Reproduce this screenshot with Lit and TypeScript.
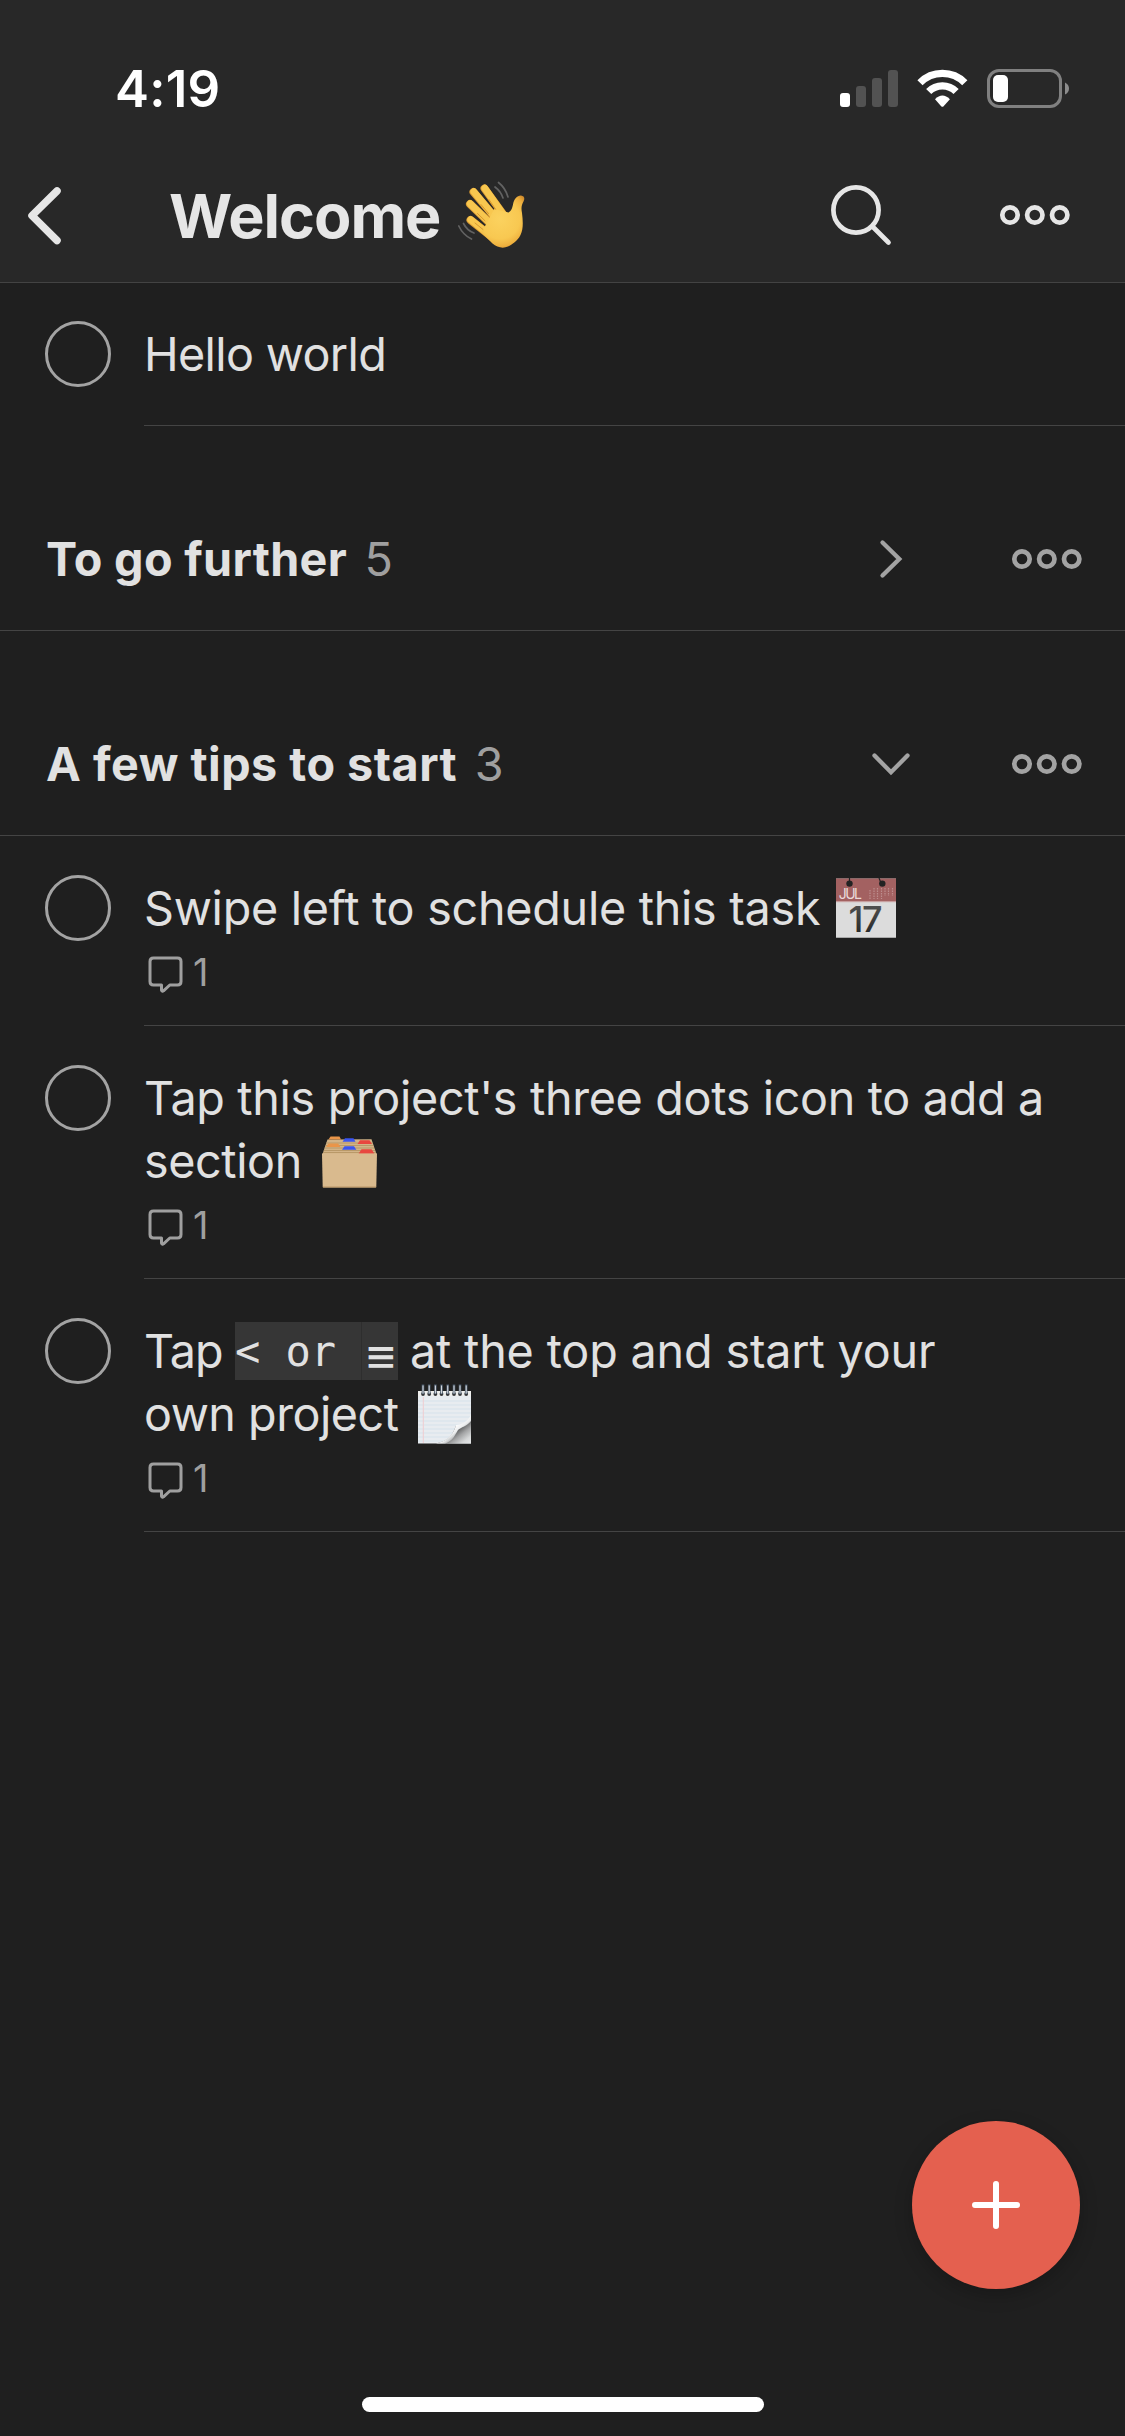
import { LitElement, html, css, svg, nothing, TemplateResult } from "lit";
import { customElement, property } from "lit/decorators.js";

const dots = html`<svg class="dots" width="72" height="22" viewBox="0 0 72 22" fill="none" stroke="currentColor" stroke-width="4.7">
  <circle cx="11" cy="11" r="7.7"/><circle cx="35.8" cy="11" r="7.7"/><circle cx="60.7" cy="11" r="7.7"/>
</svg>`;

const wave = html`<svg class="wave" role="img" width="68" height="68" viewBox="0 0 68 68" fill="none" stroke-linecap="round">
  <defs>
    <radialGradient id="skin" gradientUnits="userSpaceOnUse" cx="42" cy="38" r="32">
      <stop offset="0" stop-color="#fbd25f"/><stop offset=".62" stop-color="#f8c851"/><stop offset=".85" stop-color="#eeb03e"/><stop offset="1" stop-color="#cf8a2b"/>
    </radialGradient>
  </defs>
  <g stroke="#626262" stroke-width="1.7">
    <path d="M40.5 1.5Q47.5 7 50 16"/><path d="M37 6Q43 10.500 45 17"/>
    <path d="M.8 45Q5 54 13.500 58"/><path d="M5.500 42.500Q9 49.500 16 52"/>
  </g>
  <g stroke="#d99a33" stroke-width="8">
    <path d="M26.500 7.500L45 33M15.500 11L40 40M12 23L36 46M12.500 39L34 56"/>
  </g>
  <g stroke="#f8c74f" stroke-width="6.800">
    <path d="M26.800 7.200L45 33M15.800 10.700L40 40M12.200 22.700L36 46M12.700 38.700L34 56"/>
  </g>
  <path fill="url(#skin)" d="M36 28L50.500 31.500C53.500 30 54.500 26 55 23.500C56 18 59 14.500 63 14.600C66.500 15 67 18 65.500 20.500C63.500 24 63 27 64 32C65 40 65.500 48 62.500 54C59.500 60 54 63.500 50 65.500C45 67.800 39 66.500 34.500 62.500L23 51L29 42Z"/>
  <g stroke="#d9992f" stroke-width="1">
    <path d="M31 18.500L37.600 28.200M23 23.500L30.500 32.500M19.500 32.500L27 39.800M17 42L25 48.500"/>
  </g>
</svg>`;

const calendar = html`<svg class="emoji cal" role="img" width="60" height="60" viewBox="0 0 60 60">
  <defs><linearGradient id="ink" x1="0" y1="0" x2="0" y2="1"><stop offset="0" stop-color="#5c5c5c"/><stop offset="1" stop-color="#1d1d1d"/></linearGradient></defs>
  <rect width="60" height="60" fill="#dcdcdc"/>
  <rect width="60" height="23" fill="#a36161"/>
  <rect width="60" height="1" fill="#8a6a6a"/><rect y="23" width="60" height="1.200" fill="#c79f9f"/>
  <rect y="59" width="60" height="1" fill="#a9a9a9"/>
  <path d="M13.500 0V5M43 0L45 5" stroke="#222" stroke-width="1.200"/>
  <circle cx="13.500" cy="5.600" r="3.200" fill="#222"/><circle cx="46.300" cy="5.600" r="3.200" fill="#222"/>
  <g stroke="#bd8d8d" stroke-width="1.200" stroke-dasharray="1.500 1">
    <path d="M34 12V21M38 10V21M41.500 10V21M45.500 10V21M49 10V18M52.500 10V18M56.500 10V18"/>
  </g>
  <text class="jul" x="2.800" y="21" textLength="23">JUL</text>
  <text class="day" x="12.500" y="54" textLength="34" fill="url(#ink)">17</text>
</svg>`;

const folder = html`<svg class="emoji fold" role="img" width="55" height="52" viewBox="0 0 55 52">
  <path d="M5.500 3.500L49.500 3.200L54.500 18H.500Z" fill="#d3b488"/>
  <g stroke="#b2925f" stroke-width=".8"><path d="M4 7H50.500M3.500 9.500H51M2.500 12H52M1.800 14.500H53M1 16.500H54"/></g>
  <path d="M6.500 3.500L8.500 .500H17.500L19 3.500Z" fill="#ea9549"/>
  <path d="M4 11L6.500 7.500H16L18.500 11Z" fill="#ea9549"/>
  <path d="M20.500 5.800L23 2.300H31.500L33.500 5.800Z" fill="#3a55f0"/>
  <path d="M20 13.800L22.500 10.300H32L34.300 13.800Z" fill="#3a55f0"/>
  <path d="M35.500 8L38 4.300H47.500L50 8Z" fill="#e8473f"/>
  <path d="M36.500 17.800L39.500 13.300H49.500L52.500 17.800Z" fill="#e8473f"/>
  <path d="M0 17.500H55L54.300 50.500Q54.200 51.500 53.500 51.500H1.500Q.800 51.500 .700 50.500Z" fill="#d9ba8e"/>
  <path d="M.8 51H54.200" stroke="#b89566" stroke-width="1"/>
</svg>`;

const notepad = html`<svg class="emoji note" role="img" width="53" height="60" viewBox="0 0 53 60">
  <defs>
    <linearGradient id="under" gradientUnits="userSpaceOnUse" x1="39" y1="46" x2="50" y2="60"><stop offset="0" stop-color="#5f6061"/><stop offset=".35" stop-color="#a3a4a5"/><stop offset=".75" stop-color="#d6d8d9"/><stop offset="1" stop-color="#e2e4e5"/></linearGradient>
    <linearGradient id="curl" gradientUnits="userSpaceOnUse" x1="33" y1="44" x2="41" y2="54"><stop offset="0" stop-color="#fff"/><stop offset=".45" stop-color="#eceeef"/><stop offset="1" stop-color="#8c8e90"/></linearGradient>
  </defs>
  <rect y="7" width="53" height="52.500" fill="#e8ecf0"/>
  <rect y="7" width="53" height="5" fill="#eeeeec"/>
  <path d="M0 17H53M0 21H53M0 25H53M0 29H53M0 33H53M0 37H53M0 41H53M0 45H53M0 49H53M0 53H53M0 57H53" stroke="#d6e2eb" stroke-width="1"/>
  <path d="M5.300 13V59" stroke="#efcdd0" stroke-width="1"/>
  <path d="M53 33V59.500H18C31 57 35 50 38 41.500C43 42 49 40 53 33Z" fill="url(#under)"/>
  <path d="M53 31C49 38 44 40.500 38 41C36 49 30 57 18 59.500H27C35 57 37 51 40 46C43 43.500 49 42 53 37Z" fill="url(#curl)"/>
  ${[5, 11.2, 17.4, 23.500, 29.700, 36, 42, 48.200].map((x) => svg`
    <circle cx=${x} cy="10" r="1.900" fill="#35373a"/>
    <path d=${`M${x} 0.500V10`} stroke="#4b5a6b" stroke-width="2.600"/>
    <path d=${`M${x} 1.500V9.500`} stroke="#d5d9de" stroke-width="1.100"/>`)}
</svg>`;

const bubble = html`<svg width="35" height="37" viewBox="0 0 35 37" fill="none" stroke="currentColor" stroke-width="3" stroke-linejoin="round">
  <path d="M5.500 2H29.500Q33 2 33 5.500V25.500Q33 29 29.500 29H21.800L15.500 34.800Q14 35.800 13.500 34V29H5.500Q2 29 2 25.500V5.500Q2 2 5.500 2Z"/>
</svg>`;

@customElement("task-row")
class TaskRow extends LitElement {
  @property({ attribute: false }) content: TemplateResult = html``;
  @property({ type: Number }) comments = 0;
  static styles = css`
    :host { display: block; }
    .row { display: flex; align-items: flex-start; padding-left: 45px; }
    .check { box-sizing: border-box; width: 66px; height: 66px; margin: 39px 33px 0 0; border: 3px solid #a3a3a3; border-radius: 50%; flex: none; }
    .body { flex: 1; padding: 41px 0 39px 0; border-bottom: 1px solid #444; }
    .body.has { padding-bottom: 27px; }
    .line { display: flex; height: 63px; line-height: 63px; font-size: 46.7px; color: #e1e1e1; white-space: pre; }
    .greeting { letter-spacing: -.65px; }
    .swipe { letter-spacing: -.27px; }
    .tap { letter-spacing: -.33px; }
    .sect { letter-spacing: -.4px; }
    .lead { letter-spacing: -.92px; }
    .rest { letter-spacing: -.16px; }
    .own { letter-spacing: -.5px; }
    .meta { display: flex; align-items: center; gap: 10px; height: 46px; margin: 11px 0 1px 4px; color: #9f9f9f; font-size: 38px; line-height: 40px; }
    .num { padding-bottom: 4px; }
    .emoji { flex: none; overflow: visible; }
    .cal { margin: 1px 0 0 16px; }
    .fold { margin: 6px 0 0 20px; }
    .note { margin: 1px 0 0 20px; }
    .jul { font-size: 14px; fill: #ead9d9; font-weight: 400; }
    .day { font-size: 36px; font-weight: 500; }
    .code { display: flex; height: 58px; margin: 2px 11.5px 0 0; font-family: "DejaVu Sans Mono", monospace; font-size: 42px; }
    .code span { background: #363636; line-height: 60px; }
    .code .glyph { width: 37px; box-sizing: border-box; padding-left: 2px; border-left: 1px solid #2e2e2e; }
    .bars { display: block; height: 58px; font: 39px/69px "DejaVu Sans", sans-serif; transform: scaleY(1.19); transform-origin: 0 36px; }
  `;
  render() {
    return html`<div class="row"><div class="check"></div>
      <div class="body ${this.comments ? "has" : ""}">${this.content}
        ${this.comments ? html`<div class="meta">${bubble}<span class="num">${this.comments}</span></div>` : nothing}
      </div></div>`;
  }
}

@customElement("section-head")
class SectionHead extends LitElement {
  @property() name = "";
  @property() count = "";
  @property({ type: Boolean }) open = false;
  static styles = css`
    :host { display: flex; align-items: center; box-sizing: border-box; height: 205px; padding: 61px 42px 0 46px; border-bottom: 1px solid #444; font-size: 46.7px; color: #e1e1e1; }
    .name { font-weight: 700; white-space: pre; letter-spacing: .3px; }
    .name.open { letter-spacing: .5px; }
    .count { margin-left: 17.5px; color: #9f9f9f; }
    .chev { width: 40px; height: 40px; margin: 0 100px 0 auto; color: #a3a3a3; }
    .dots { color: #a3a3a3; }
  `;
  render() {
    return html`<span class="name ${this.open ? "open" : ""}">${this.name}</span><span class="count">${this.count}</span>
      <svg class="chev" viewBox="0 0 40 40" fill="none" stroke="currentColor" stroke-width="4.300" stroke-linecap="round">
        <path d=${this.open ? "M3.500 11.500L20 28.300L36.500 11.500" : "M11.500 3.500L28.300 20L11.500 36.500"}/></svg>${dots}`;
  }
}

@customElement("app-root")
class AppRoot extends LitElement {
  static styles = css`
    :host { display: block; position: relative; width: 1125px; height: 2436px; overflow: hidden; background: #1f1f1f; font-family: Inter, "Liberation Sans", sans-serif; }
    .top { position: relative; height: 282px; background: #282828; box-shadow: 0 1px 0 #434343; }
    .status { display: flex; height: 148px; box-sizing: border-box; padding: 59px 56px 29px 115px; align-items: center; justify-content: space-between; color: #fff; }
    .time { font-size: 51px; font-weight: 600; line-height: 60px; letter-spacing: .2px; }
    .bar { display: flex; align-items: center; height: 134px; box-sizing: border-box; padding: 0 54px 0 26px; color: #e6e6e6; }
    .title { margin-left: 107px; padding-top: 2px; font-size: 61px; font-weight: 700; letter-spacing: -1px; color: #e6e6e6; }
    .wave { margin-left: 18px; }
    .search { margin-left: auto; margin-right: 107px; }
    .fab { position: absolute; left: 912px; top: 2121px; width: 168px; height: 168px; border-radius: 50%; background: #e4604f; box-shadow: 0 6px 18px rgba(0,0,0,.22); display: grid; place-items: center; }
    .home { position: absolute; left: 362px; top: 2397px; width: 402px; height: 15px; border-radius: 8px; background: #fff; }
  `;
  render() {
    return html`
      <div class="top">
        <div class="status">
          <span class="time">4:19</span>
          <svg width="229" height="40" viewBox="0 0 229 40">
            <rect y="24" width="10" height="14" rx="3" fill="#fff"/>
            <g fill="#525252"><rect x="16" y="17" width="10" height="21" rx="3"/><rect x="32" y="9" width="10" height="29" rx="3"/><rect x="48" y="1" width="10" height="37" rx="3"/></g>
            <g fill="none" stroke="#fff">
              <path stroke-width="7.300" d="M80 13.800A31.500 31.500 0 0 1 124.800 13.800"/>
              <path stroke-width="7.300" d="M88.700 22.500A19.300 19.300 0 0 1 116.100 22.500"/>
            </g>
            <path fill="#fff" d="M95 30.200Q102.400 22.700 109.900 30.200L103.600 37.300Q102.400 38.400 101.200 37.300Z"/>
            <rect x="148.500" y="1.500" width="72" height="36" rx="10.500" fill="none" stroke="#808080" stroke-width="3"/>
            <rect x="153" y="6" width="15" height="27" rx="5" fill="#fff"/>
            <path d="M225 13.500Q229 15.500 229 19.500Q229 23.500 225 25.500Z" fill="#8c8c8c"/>
          </svg>
        </div>
        <div class="bar">
          <svg width="36" height="60" viewBox="0 0 36 60" fill="none" stroke="currentColor" stroke-width="7.500" stroke-linecap="round" stroke-linejoin="round"><path d="M31 6L6 30.700L31 55.500"/></svg>
          <span class="title">Welcome</span>${wave}
          <svg class="search" width="62" height="62" viewBox="0 0 62 62" fill="none" stroke="currentColor" stroke-width="4.700" stroke-linecap="round"><circle cx="26" cy="26" r="22.600"/><path d="M42.500 42.500L58.500 58.500"/></svg>
          ${dots}
        </div>
      </div>
      <task-row .content=${html`<div class="line"><span class="greeting">Hello world</span></div>`}></task-row>
      <section-head name="To go further" count="5"></section-head>
      <section-head name="A few tips to start" count="3" open></section-head>
      <task-row .comments=${1} .content=${html`<div class="line"><span class="swipe">Swipe left to schedule this task</span>${calendar}</div>`}></task-row>
      <task-row .comments=${1} .content=${html`<div class="line"><span class="tap">Tap this project's three dots icon to add a</span></div><div class="line"><span class="sect">section</span>${folder}</div>`}></task-row>
      <task-row .comments=${1} .content=${html`<div class="line"><span class="lead">Tap </span><div class="code"><span>${"< or "}</span><span class="glyph"><b class="bars">≡</b></span></div><span class="rest">at the top and start your</span></div><div class="line"><span class="own">own project</span>${notepad}</div>`}></task-row>
      <div class="fab"><svg width="48" height="48" viewBox="0 0 48 48" stroke="#fff" stroke-width="6" stroke-linecap="round"><path d="M24 3V45M3 24H45"/></svg></div>
      <div class="home"></div>`;
  }
}
